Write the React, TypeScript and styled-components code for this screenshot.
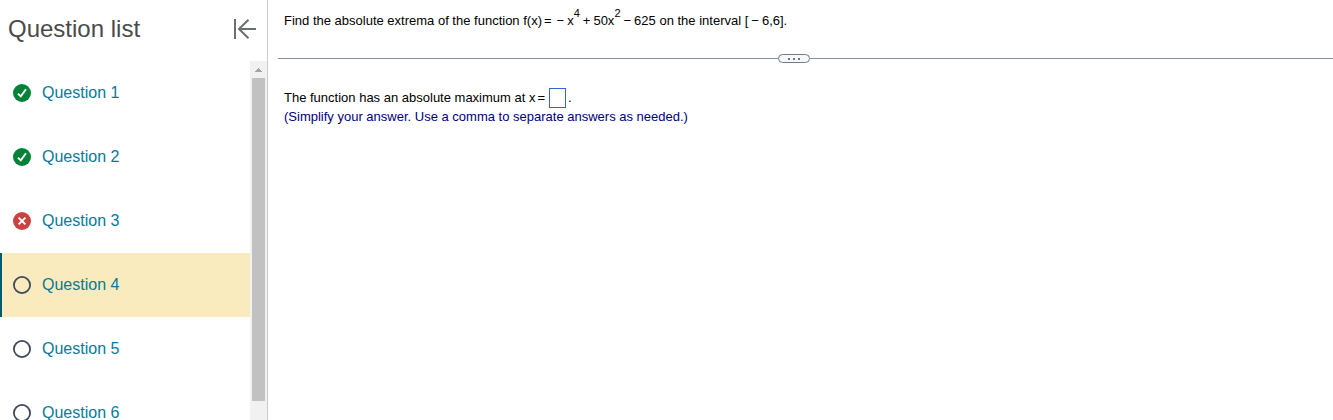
import React from "react";
import styled, { createGlobalStyle } from "styled-components";

const GlobalStyle = createGlobalStyle`
  *, *::before, *::after { box-sizing: border-box; }
  html, body { margin: 0; height: 100%; }
  #root { height: 100%; }
  body {
    background: #fff;
    font-family: "Liberation Sans", Arial, sans-serif;
    overflow: hidden;
  }
`;

const Page = styled.div`
  display: flex;
  height: 100%;
`;

const Sidebar = styled.aside`
  display: flex;
  flex-direction: column;
  flex: 0 0 268px;
  border-right: 1px solid #c7cad6;
`;

const SidebarHeader = styled.header`
  display: flex;
  align-items: center;
  justify-content: space-between;
  flex: none;
  height: 61px;
  padding: 0 10px 4px 8px;
`;

const Title = styled.h2`
  margin: 0;
  font-size: 24px;
  line-height: 28px;
  font-weight: 400;
  color: #4a4a4a;
`;

const CollapseButton = styled.button`
  display: flex;
  padding: 0;
  border: 0;
  background: none;
  color: #6a7070;
  cursor: pointer;
`;

const ListArea = styled.div`
  display: flex;
  flex: 1;
  min-height: 0;
`;

const QuestionList = styled.ul`
  flex: 1;
  margin: 0;
  padding: 0;
  list-style: none;
  overflow: hidden;
`;

const QuestionRow = styled.li<{ $active: boolean }>`
  display: flex;
  align-items: center;
  gap: 11px;
  height: 64px;
  padding-left: 11px;
  border-left: 2px solid ${(p) => (p.$active ? "#005a70" : "transparent")};
  background: ${(p) => (p.$active ? "#f9ebbd" : "transparent")};
`;

const QuestionLink = styled.a`
  font-size: 16px;
  line-height: 20px;
  color: #047a9c;
  text-decoration: none;
`;

const StatusSvg = styled.svg`
  flex: none;
  display: block;
`;

const ScrollTrack = styled.div`
  display: flex;
  flex-direction: column;
  align-items: center;
  flex: 0 0 17px;
  background: #f1f1f1;
`;

const ScrollArrow = styled.svg`
  flex: none;
  display: block;
`;

const ScrollThumb = styled.div`
  width: 13px;
  height: 90%;
  background: #c1c1c1;
`;

const Main = styled.main`
  flex: 1;
  min-width: 0;
  font-size: 13px;
  line-height: 19px;
  color: #000;
`;

const Prompt = styled.p`
  margin: 0;
  padding: 11px 16px 0;
  height: 54px;
`;

const Expression = styled.span`
  white-space: nowrap;
`;

const Equals = styled.span`
  margin: 0 2px;
`;

const Operator = styled.span`
  margin: 0 3px;
`;

const Power = styled.sup`
  position: relative;
  top: -8px;
  font-size: 11px;
  line-height: 0;
  vertical-align: baseline;
`;

const Divider = styled.div`
  display: grid;
  grid-template-columns: 500fr 32px 523fr;
  align-items: center;
  margin-left: 10px;
`;

const Rule = styled.span`
  height: 1px;
  background: #8791a5;
`;

const MoreButton = styled.button`
  display: flex;
  align-items: center;
  justify-content: center;
  gap: 3px;
  height: 9px;
  padding: 0;
  border: 1px solid #6f7b90;
  border-radius: 5px;
  background: #f5f7f9;
  cursor: pointer;
`;

const Dot = styled.span`
  width: 2px;
  height: 2px;
  background: #6f7580;
`;

const Answer = styled.div`
  padding: 25px 16px 0;
`;

const AnswerLine = styled.div`
  display: flex;
  align-items: center;
  height: 19px;
`;

const AnswerInput = styled.input`
  width: 17px;
  height: 20px;
  margin: 0 2px;
  padding: 0;
  border: 1px solid #3366cc;
  border-radius: 0;
  background: #fff;
  font: inherit;
  outline: none;
`;

const Hint = styled.p`
  margin: 0;
  color: #000080;
`;

type Status = "correct" | "incorrect" | "open";

const questions: { id: number; status: Status }[] = [
  { id: 1, status: "correct" },
  { id: 2, status: "correct" },
  { id: 3, status: "incorrect" },
  { id: 4, status: "open" },
  { id: 5, status: "open" },
  { id: 6, status: "open" },
];

function StatusIcon({ status }: { status: Status }) {
  return (
    <StatusSvg width="18" height="18" viewBox="0 0 18 18" fill="none" role="img" aria-label={status}>
      {status === "correct" && (
        <>
          <circle cx="9" cy="9" r="9" fill="#038238" />
          <path d="M5 9.8 7.8 12.4 13 5.3" stroke="#fff" strokeWidth="1.9" />
        </>
      )}
      {status === "incorrect" && (
        <>
          <circle cx="9" cy="9" r="9" fill="#cb4242" />
          <path d="M5.6 5.6 12.4 12.4M12.4 5.6 5.6 12.4" stroke="#fff" strokeWidth="1.9" />
        </>
      )}
      {status === "open" && <circle cx="9" cy="9" r="8.1" stroke="#3d4a5c" strokeWidth="1.8" />}
    </StatusSvg>
  );
}

export default function App() {
  const current = 4;
  return (
    <>
      <GlobalStyle />
      <Page>
        <Sidebar>
          <SidebarHeader>
            <Title>Question list</Title>
            <CollapseButton type="button" aria-label="Collapse question list">
              <svg width="24" height="22" viewBox="0 0 24 22" fill="none" stroke="currentColor" strokeWidth="2">
                <path d="M2 1v20M23 11H6M15.5 1.8 6 11l9.500 9.200" />
              </svg>
            </CollapseButton>
          </SidebarHeader>
          <ListArea>
            <QuestionList>
              {questions.map((q) => (
                <QuestionRow key={q.id} $active={q.id === current}>
                  <StatusIcon status={q.status} />
                  <QuestionLink href={`#question-${q.id}`}>Question {q.id}</QuestionLink>
                </QuestionRow>
              ))}
            </QuestionList>
            <ScrollTrack aria-hidden="true">
              <ScrollArrow width="17" height="17" viewBox="0 0 17 17" shapeRendering="crispEdges">
                <path d="M5 11h7v-1h-1V9h-1V8H9V7H8v1H7v1H6v1H5z" fill="#a3a3a3" />
              </ScrollArrow>
              <ScrollThumb />
            </ScrollTrack>
          </ListArea>
        </Sidebar>
        <Main>
          <Prompt>
            Find the absolute extrema of the function{" "}
            <Expression>
              f(x)<Equals>=</Equals>
              <Operator>−</Operator>x<Power>4</Power>
              <Operator>+</Operator>50x<Power>2</Power>
              <Operator>−</Operator>625
            </Expression>{" "}
            on the interval{" "}
            <Expression>
              [<Operator>−</Operator>6,6].
            </Expression>
          </Prompt>
          <Divider>
            <Rule />
            <MoreButton type="button" aria-label="Resize panes">
              <Dot />
              <Dot />
              <Dot />
            </MoreButton>
            <Rule />
          </Divider>
          <Answer>
            <AnswerLine>
              <label htmlFor="answer">
                The function has an absolute maximum at x<Equals>=</Equals>
              </label>
              <AnswerInput id="answer" type="text" />
              <span>.</span>
            </AnswerLine>
            <Hint>(Simplify your answer. Use a comma to separate answers as needed.)</Hint>
          </Answer>
        </Main>
      </Page>
    </>
  );
}
